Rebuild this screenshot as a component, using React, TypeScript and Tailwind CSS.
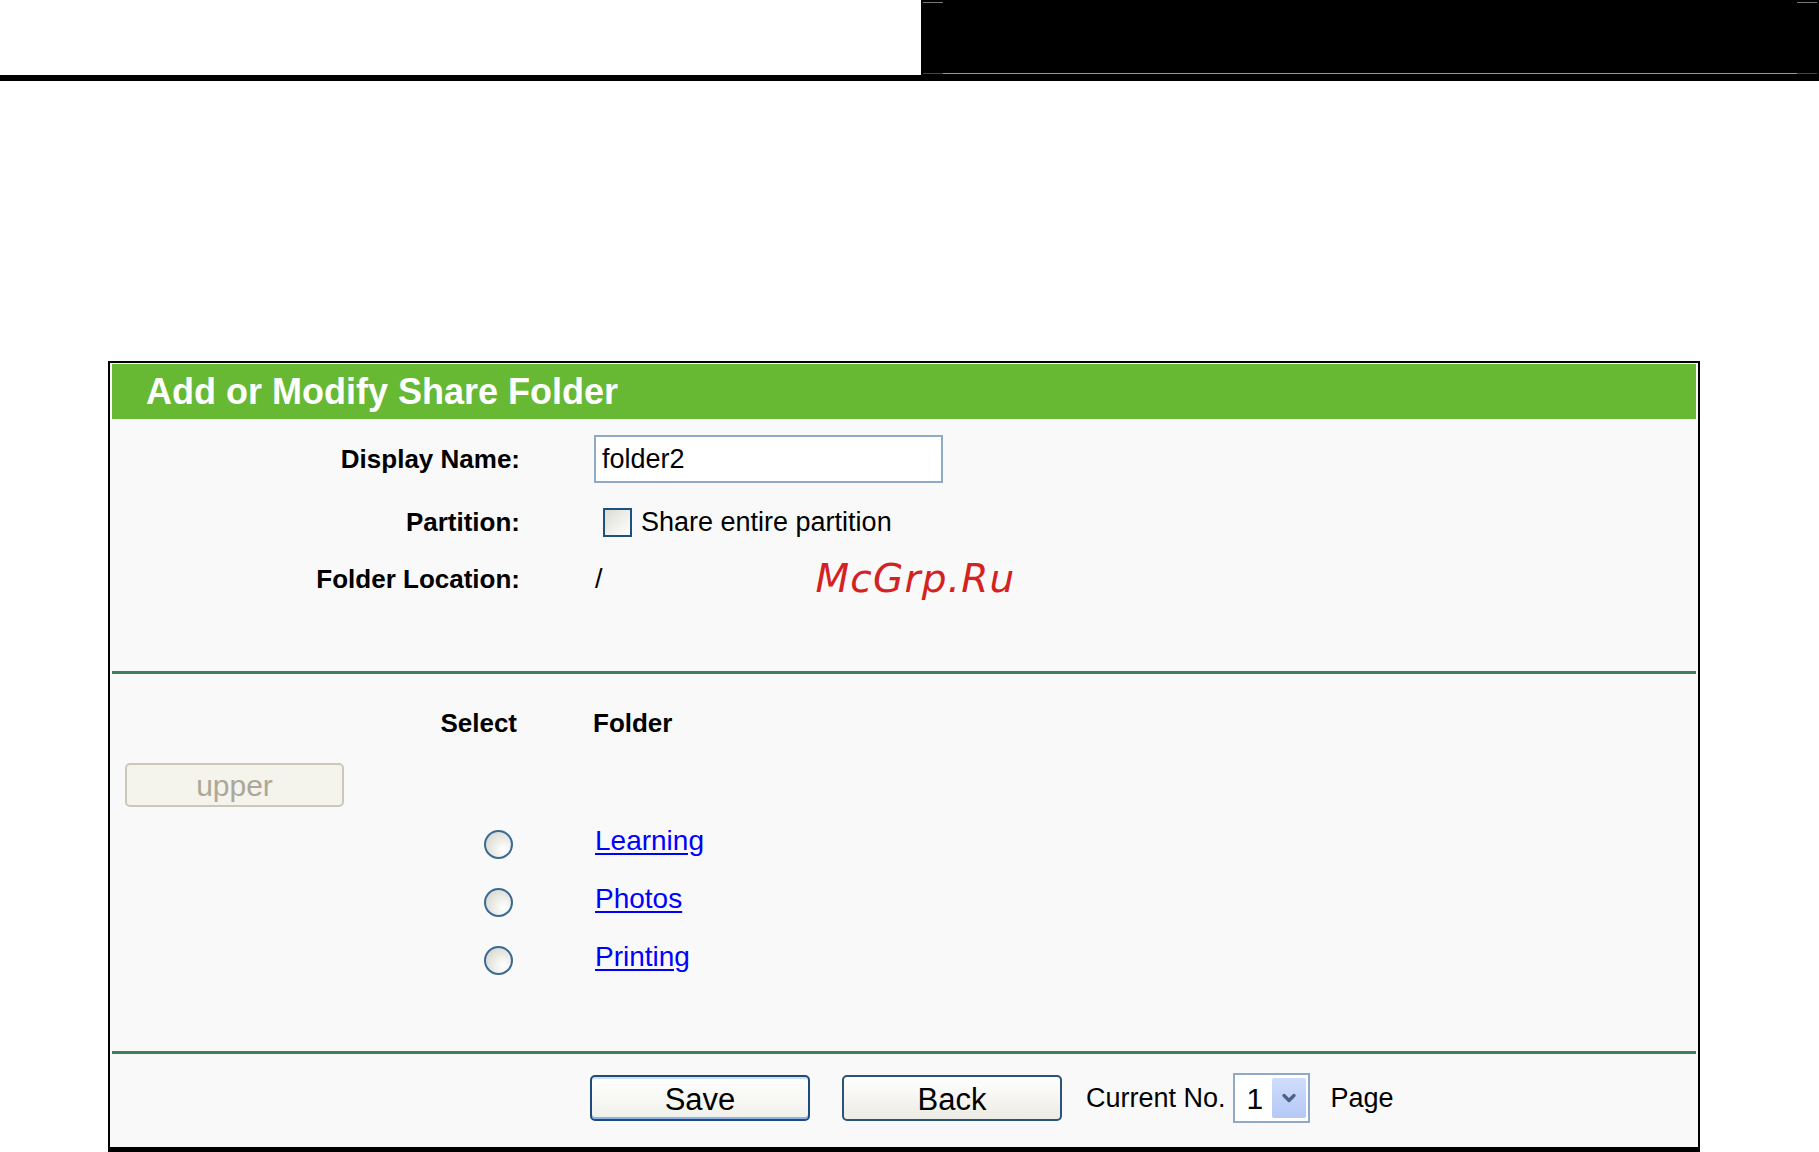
import { ChevronDown } from "lucide-react";

const folders = ["Learning", "Photos", "Printing"];

function FormRow({
  label,
  children,
  className = "",
}: {
  label: string;
  children: React.ReactNode;
  className?: string;
}) {
  return (
    <div className={`grid grid-cols-[408px_1fr] items-center gap-x-[74px] ${className}`}>
      <div className="text-right text-[26px] font-bold text-black">{label}</div>
      <div className="flex items-center">{children}</div>
    </div>
  );
}

function Radio() {
  return (
    <span className="block h-[29px] w-[29px] rounded-full border-2 border-[#3a6a93] bg-[radial-gradient(circle_at_70%_70%,#ffffff_0%,#e4e4dd_60%,#cfcfc8_100%)]" />
  );
}

export default function App() {
  return (
    <div
      className="h-[1152px] overflow-hidden bg-white text-black"
      style={{ fontFamily: '"Liberation Sans", Arial, sans-serif' }}
    >
      {/* top bar */}
      <div className="flex h-[75px]">
        <div className="w-[921px]" />
        <div className="flex flex-1 flex-col justify-between bg-black">
          <div className="mt-[2px] flex justify-between px-[2px]">
            <div className="h-[1px] w-[20px] bg-[#777]" />
            <div className="h-[1px] w-[20px] bg-[#777]" />
          </div>
          <div className="mb-[1px] flex px-[2px]">
            <div className="h-[1px] w-[20px] bg-[#444]" />
            <div className="h-[1px] flex-1 bg-[#999]" />
            <div className="h-[1px] w-[20px] bg-[#444]" />
          </div>
        </div>
      </div>
      <div className="h-[6px] bg-black" />

      <div className="pl-[108px] pr-[119px] pt-[280px]">
        <div className="border-2 border-b-[5px] border-black bg-[#f9f9f9] px-[2px] pt-[1px] pb-[26px]">
          {/* header */}
          <div className="flex h-[55px] items-center bg-[#67b934] pl-[34px] text-[36px] font-bold leading-none text-white">
            Add or Modify Share Folder
          </div>

          {/* form */}
          <FormRow label="Display Name:" className="mt-[16px] h-[48px]">
            <div className="flex h-[48px] w-[349px] items-center border-2 border-[#8faac6] bg-white pl-[6px] text-[27px]">
              folder2
            </div>
          </FormRow>
          <FormRow label="Partition:" className="mt-[14px] h-[50px]">
            <span className="ml-[9px] block h-[29px] w-[29px] border-2 border-[#1c5180] bg-[linear-gradient(135deg,#dcdcd5,#ffffff)]" />
            <span className="ml-[9px] text-[27px]">Share entire partition</span>
          </FormRow>
          <FormRow label="Folder Location:" className="mt-[3px] h-[50px]">
            <span className="pl-[1px] text-[27px]">/</span>
            <span
              className="ml-[213px] text-[39px] italic tracking-[1.2px] text-[#d42222]"
              style={{ fontFamily: '"DejaVu Sans", sans-serif' }}
            >
              McGrp.Ru
            </span>
          </FormRow>

          <div className="mt-[71px] h-[3px] bg-[#3f7f5f]" />

          {/* folder list */}
          <div className="mt-[29px] grid h-[40px] grid-cols-[408px_1fr] items-center gap-x-[73px] text-[26px] font-bold">
            <div className="pr-[3px] text-right">Select</div>
            <div>Folder</div>
          </div>
          <div className="mt-[20px] pl-[13px]">
            <button
              type="button"
              disabled
              className="flex h-[44px] w-[219px] items-center justify-center rounded-[5px] border-2 border-[#cbc8b9] bg-[#f4f3ec] text-[30px] text-[#aca899]"
            >
              upper
            </button>
          </div>
          <div className="mt-[8px]">
            {folders.map((name) => (
              <div key={name} className="grid h-[58px] grid-cols-[408px_1fr] items-center gap-x-[75px]">
                <div className="flex justify-end pr-[7px]">
                  <Radio />
                </div>
                <a href="#" className="mb-[7px] text-[28px] text-[#0000ff] underline underline-offset-[3px]">
                  {name}
                </a>
              </div>
            ))}
          </div>

          <div className="mt-[62px] h-[3px] bg-[#3f7f5f]" />

          {/* footer */}
          <div className="mt-[21px] flex h-[46px] items-center pl-[478px] text-[27px]">
            <button
              type="button"
              className="h-[46px] w-[220px] rounded-[5px] border-2 border-[#1d4c7c] bg-[linear-gradient(#ffffff,#f0f0ea)] text-[31px] shadow-[inset_0_-2px_0_#8db2e3,inset_0_2px_0_#cfe0f8]"
            >
              Save
            </button>
            <button
              type="button"
              className="ml-[32px] h-[46px] w-[220px] rounded-[5px] border-2 border-[#2b5377] bg-[linear-gradient(#ffffff,#ecebe5)] text-[31px]"
            >
              Back
            </button>
            <span className="ml-[24px]">Current No.</span>
            <div className="ml-[7px] flex h-[50px] w-[77px] items-center border-2 border-[#8faac6] bg-white pr-[2px]">
              <span className="flex-1 pl-[12px] text-[30px]">1</span>
              <span className="flex h-[40px] w-[34px] items-center justify-center rounded-[2px] bg-[linear-gradient(#cfdcfc,#b5c9f6)]">
                <ChevronDown className="h-[20px] w-[20px] text-[#4d6185]" strokeWidth={4} />
              </span>
            </div>
            <span className="ml-[21px]">Page</span>
          </div>
        </div>
      </div>
    </div>
  );
}
